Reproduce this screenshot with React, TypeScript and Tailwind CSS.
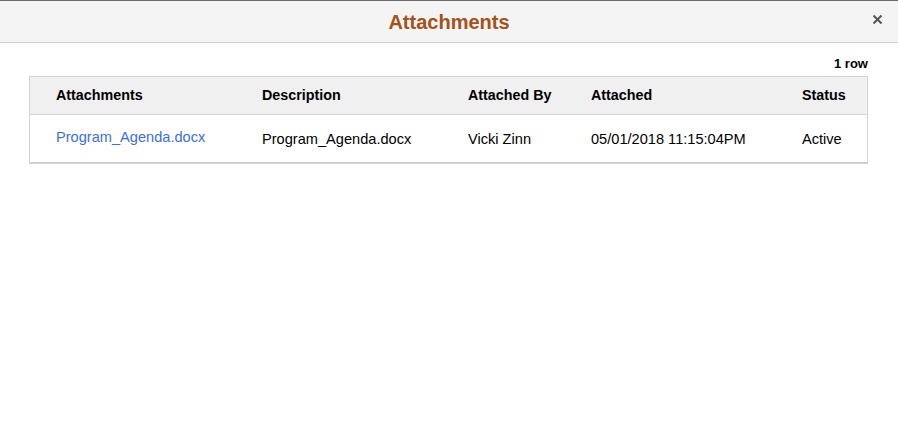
const columns = ["Attachments", "Description", "Attached By", "Attached", "Status"];

const App = () => {
  return (
    <div className="w-[898px] h-[444px] bg-white font-['Liberation_Sans',Arial,sans-serif] text-black overflow-hidden">
      {/* Modal header */}
      <div className="relative flex items-center justify-center h-[43px] bg-[#f4f4f4] border-t border-t-[#6b6b6b] border-b border-b-[#cccccc]">
        <h1 className="text-[20px] font-bold text-[#a3521a] leading-none">Attachments</h1>
        <button className="absolute right-[15px] top-[13px] text-[#555555]">
          <svg width="11" height="11" viewBox="0 0 11 11">
            <path d="M1.5 1.5 L9.5 9.5 M9.5 1.5 L1.5 9.5" stroke="currentColor" strokeWidth="2" />
          </svg>
        </button>
      </div>

      <div className="pl-[29px] pr-[30px]">
        <div className="flex justify-end h-[33px] pt-[14px]">
          <span className="text-[13px] font-bold leading-none">1 row</span>
        </div>

        <div className="border border-[#d4d4d4] border-b-2 border-b-[#d0d0d0]">
          <div className="grid grid-cols-[206px_206px_123px_211px_1fr] h-[38px] items-center bg-[#f0f0f0] border-b border-[#d4d4d4] text-[14.3px] font-bold">
            {columns.map((c) => (
              <div key={c} className="pl-[26px] pt-[1px]">
                {c}
              </div>
            ))}
          </div>
          <div className="grid grid-cols-[206px_206px_123px_211px_1fr] h-[47px] items-center text-[14.6px]">
            <div className="pl-[26px] pb-[2px]">
              <a href="#" className="text-[#3d6fdb]">
                Program_Agenda.docx
              </a>
            </div>
            <div className="pl-[26px] pt-[2px]">Program_Agenda.docx</div>
            <div className="pl-[26px] pt-[2px]">Vicki Zinn</div>
            <div className="pl-[26px] pt-[2px]">05/01/2018 11:15:04PM</div>
            <div className="pl-[26px] pt-[2px]">Active</div>
          </div>
        </div>
      </div>
    </div>
  );
};

export default App;
